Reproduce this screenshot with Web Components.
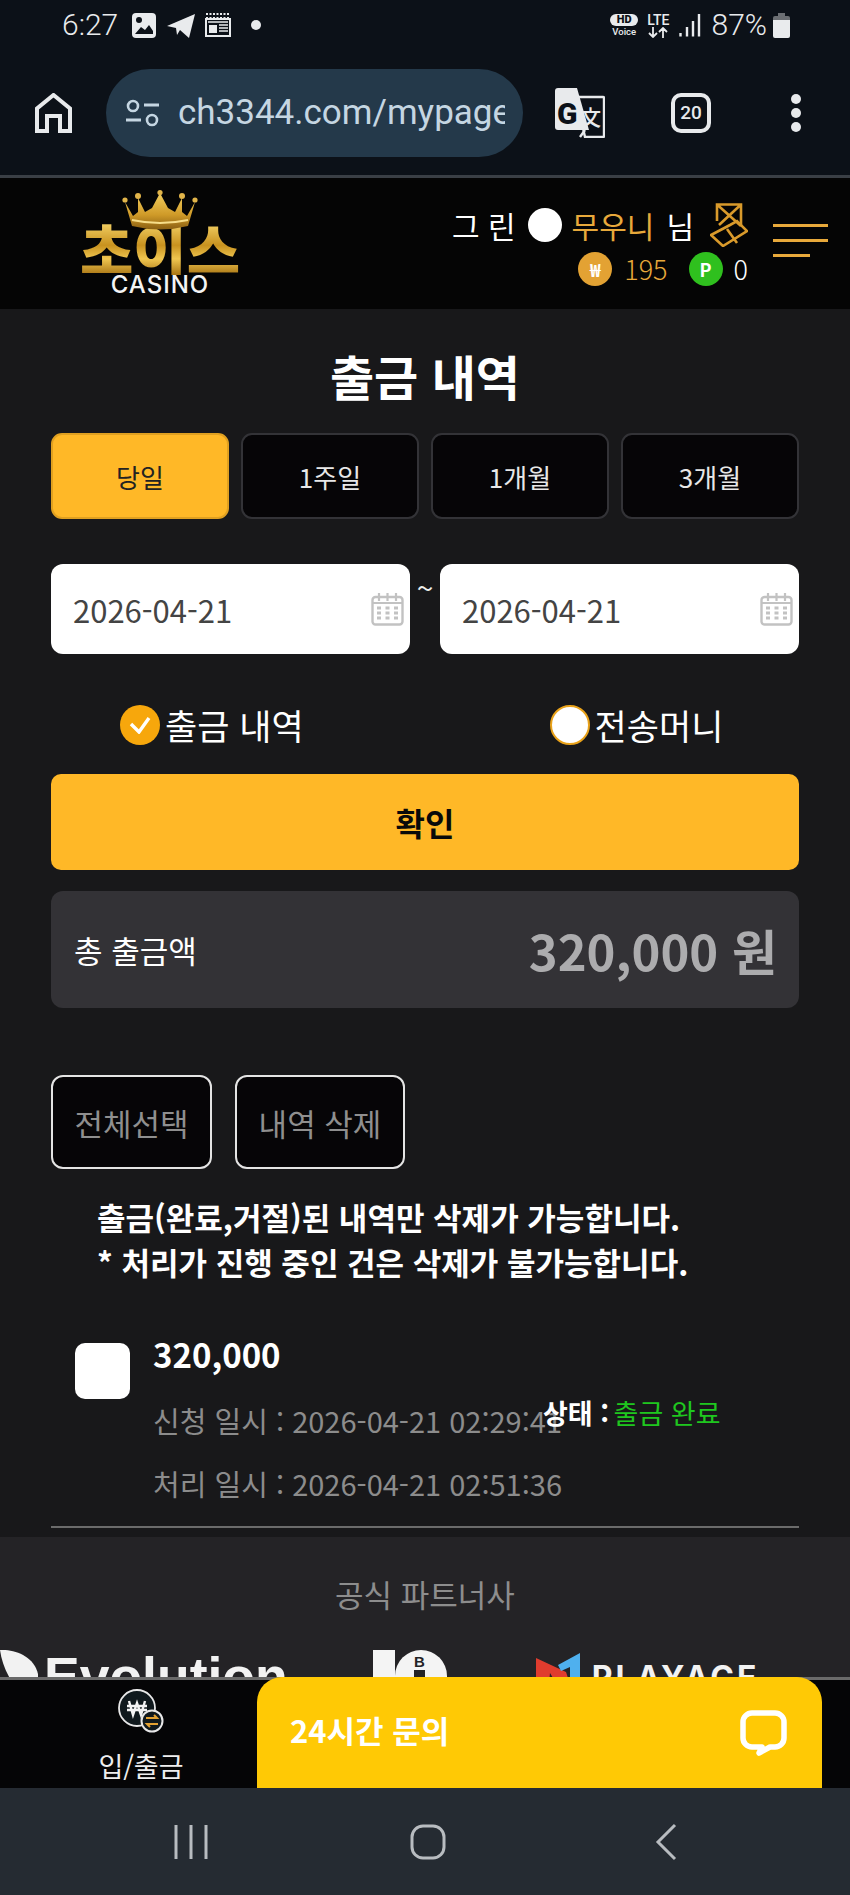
<!DOCTYPE html>
<html lang="ko">
<head>
<meta charset="utf-8">
<title>출금 내역</title>
<style>
  html, body { margin: 0; padding: 0; background: #18181a; }
  body {
    width: 850px; height: 1895px; overflow: hidden;
    display: flex; flex-direction: column;
    font-family: 'Noto Sans CJK KR', 'Noto Sans', sans-serif;
    color: #fff;
  }
</style>
</head>
<body>
<status-bar></status-bar>
<browser-bar></browser-bar>
<site-header></site-header>
<history-page>
  <h-title slot="title">출금 내역</h-title>
  <period-tab slot="tabs" active>당일</period-tab>
  <period-tab slot="tabs">1주일</period-tab>
  <period-tab slot="tabs">1개월</period-tab>
  <period-tab slot="tabs">3개월</period-tab>
  <date-field slot="from">2026-04-21</date-field>
  <date-field slot="to">2026-04-21</date-field>
  <radio-option slot="radios" checked>출금 내역</radio-option>
  <radio-option slot="radios">전송머니</radio-option>
  <dark-button slot="actions" style="width:161px">전체선택</dark-button>
  <dark-button slot="actions" style="width:170px">내역 삭제</dark-button>
  <history-item slot="items" amount="320,000" requested="2026-04-21 02:29:41" processed="2026-04-21 02:51:36" state="출금 완료"></history-item>
</history-page>
<partner-strip></partner-strip>
<bottom-dock></bottom-dock>
<nav-bar></nav-bar>

<script>
class StatusBar extends HTMLElement {
  constructor() {
    super();
    this.attachShadow({ mode: 'open' }).innerHTML = `
      <style>
        :host { display: flex; align-items: center; height: 50px; padding: 0 60px 0 62px; background: #0c1118; color: #e9ebed; font-family: Roboto, sans-serif; flex: none; }
        .time { font-size: 30px; font-weight: 300; width: 70px; line-height: 1; }
        .big { font-size: 30px; font-weight: 300; line-height: 1; margin-left: 11px; }
        svg { display: block; flex: none; }
        .grow { flex: 1; }
        .hd { display: flex; flex-direction: column; align-items: center; width: 28px; font-size: 9.5px; line-height: 11px; font-weight: 500; }
        .hd b { background: #e9ebed; color: #0c1118; border-radius: 6px; width: 28px; text-align: center; font-size: 11px; line-height: 12px; font-weight: 900; }
        .lte { display: flex; flex-direction: column; align-items: center; margin-left: 9px; font-size: 14px; line-height: 14px; font-weight: 500; }
      </style>
      <span class="time">6:27</span>
      <svg width="24" height="25" viewBox="0 0 24 25"><rect width="24" height="25" rx="4" fill="#e9ebed"/><circle cx="7" cy="7" r="3" fill="#0c1118"/><path d="M3 21l6-7 4 3 4-5 4 6v3H3z" fill="#0c1118"/></svg>
      <svg style="margin-left:11px" width="28" height="25" viewBox="0 0 28 25"><path d="M0 13L28 1l-6 24-9-8-3 5-1-7z" fill="#e9ebed"/></svg>
      <svg style="margin-left:10px" width="26" height="24" viewBox="0 0 26 24"><path d="M1 1h24M1 5h24" stroke="#e9ebed" stroke-width="2" stroke-dasharray="2 1.5"/><rect x="1" y="6" width="24" height="17" fill="none" stroke="#e9ebed" stroke-width="2"/><rect x="4" y="12" width="8" height="8" fill="#e9ebed"/><path d="M14 12h9M14 15h9M14 18h9M3 9h20" stroke="#e9ebed" stroke-width="1.6"/></svg>
      <svg style="margin-left:20px" width="10" height="10"><circle cx="5" cy="5" r="5" fill="#e9ebed"/></svg>
      <span class="grow"></span>
      <span class="hd"><b>HD</b>Voice</span>
      <span class="lte">LTE
        <svg width="20" height="11" viewBox="0 0 20 11"><path d="M5 0v10M1 6l4 4 4-4M15 11V1M11 5l4-4 4 4" fill="none" stroke="#e9ebed" stroke-width="1.8"/></svg>
      </span>
      <svg style="margin-left:9px" width="22" height="24" viewBox="0 0 22 24"><path d="M1.500 20v3.500M8 14v9.500M14 8v15.500M20 1v22.500" stroke="#e9ebed" stroke-width="2.400"/></svg>
      <span class="big">87%</span>
      <svg style="margin-left:6px" width="17" height="25" viewBox="0 0 17 25"><path d="M5 0h7v3H5z" fill="#6b6e72"/><path d="M2 3h13a2 2 0 0 1 2 2v2H0V5a2 2 0 0 1 2-2z" fill="#6b6e72"/><path d="M0 7h17v16a2 2 0 0 1-2 2H2a2 2 0 0 1-2-2z" fill="#e9ebed"/></svg>`;
  }
}

class BrowserBar extends HTMLElement {
  constructor() {
    super();
    this.attachShadow({ mode: 'open' }).innerHTML = `
      <style>
        :host { display: flex; align-items: center; height: 125px; padding: 0 0 0 35px; box-sizing: border-box; background: #0c1118; flex: none; font-family: Roboto, sans-serif; }
        svg { display: block; flex: none; }
        .pill { display: flex; align-items: center; width: 417px; height: 88px; margin-left: 34px; padding-left: 19px; box-sizing: border-box; border-radius: 44px; background: #24394a; color: #c5d6e2; }
        .url { width: 327px; margin-left: 19px; font-size: 35px; font-weight: 400; white-space: nowrap; overflow: hidden; }
        .tabs { width: 40px; height: 40px; margin-left: 66px; box-sizing: border-box; border: 4px solid #e8eaec; border-radius: 10px; color: #e8eaec; font-size: 19px; font-weight: 500; display: flex; align-items: center; justify-content: center; }
      </style>
      <svg width="37" height="40" viewBox="0 0 37 40"><path d="M2 38V15.500L18.500 2 35 15.500V38H25V23H12v15z" fill="none" stroke="#e8eaec" stroke-width="4"/></svg>
      <div class="pill">
        <svg width="34" height="28" viewBox="0 0 34 28"><circle cx="8" cy="7" r="5" fill="none" stroke="#c5d6e2" stroke-width="2.600"/><path d="M19 6h15M1 21h15" stroke="#c5d6e2" stroke-width="3"/><circle cx="27" cy="21" r="5" fill="none" stroke="#c5d6e2" stroke-width="2.600"/></svg>
        <span class="url">ch3344.com/mypage</span>
      </div>
      <svg style="margin-left:32px" width="50" height="50" viewBox="0 0 50 50">
        <path d="M21 9h27a1 1 0 0 1 1 1v38a1 1 0 0 1-1 1H30z" fill="#0c1118" stroke="#e8eaec" stroke-width="2.400"/>
        <path d="M3 0h19l12 42H3a3 3 0 0 1-3-3V3a3 3 0 0 1 3-3z" fill="#e8eaec"/>
        <path d="M30 42l-5 7" stroke="#e8eaec" stroke-width="2.400"/>
        <text x="2" y="36" font-family="Roboto, sans-serif" font-size="30" font-weight="900" fill="#0c1118">G</text>
        <text x="25" y="37" font-family="'Noto Sans CJK SC', sans-serif" font-size="21" font-weight="500" fill="#e8eaec">文</text>
      </svg>
      <div class="tabs">20</div>
      <svg style="margin-left:80px" width="10" height="38" viewBox="0 0 10 38"><circle cx="5" cy="5" r="5" fill="#e8eaec"/><circle cx="5" cy="19" r="5" fill="#e8eaec"/><circle cx="5" cy="33" r="5" fill="#e8eaec"/></svg>`;
  }
}

class ChoiceLogo extends HTMLElement {
  constructor() {
    super();
    this.attachShadow({ mode: 'open' }).innerHTML = `
      <style>
        :host { display: block; position: relative; width: 160px; height: 115px; flex: none; }
        .crown { position: absolute; left: 42px; top: 0; }
        .name { position: absolute; left: 0; top: 31px; width: 160px; text-align: center; font-size: 58px; line-height: 54px; font-weight: 900; white-space: nowrap;
          background: linear-gradient(180deg, #f6d56a 0%, #c8921f 45%, #f0c650 70%, #a97514 100%); -webkit-background-clip: text; background-clip: text; color: transparent; }
        .casino { position: absolute; left: 0; top: 85px; width: 160px; text-align: center; font-family: Inter, sans-serif; font-weight: 500; font-size: 24px; letter-spacing: 1px; line-height: 20px; color: #f4f4f4; }
      </style>
      <div class="name">초이스</div>
      <svg class="crown" width="76" height="40" viewBox="0 0 76 40">
        <defs><linearGradient id="g" x1="0" y1="0" x2="0" y2="1"><stop offset="0" stop-color="#f3cf5e"/><stop offset="0.6" stop-color="#cf9a28"/><stop offset="1" stop-color="#8a5f12"/></linearGradient></defs>
        <path d="M3 12l8 14 5-4 0-14 7 14 7-4 8-15 8 15 7 4 7-14 0 14 5 4 8-14-7 24q-28 7-56 0z" fill="url(#g)"/>
        <path d="M10 30q28 6 56 0" fill="none" stroke="#f7de8a" stroke-width="2"/>
        <g fill="#e2b54a"><circle cx="3" cy="10" r="2.600"/><circle cx="16" cy="6" r="3"/><circle cx="38" cy="2.600" r="2.600"/><circle cx="60" cy="6" r="3"/><circle cx="73" cy="10" r="2.600"/></g>
      </svg>
      <div class="casino">CASINO</div>`;
  }
}

class SiteHeader extends HTMLElement {
  constructor() {
    super();
    this.attachShadow({ mode: 'open' }).innerHTML = `
      <style>
        :host { display: flex; height: 134px; box-sizing: border-box; border-top: 3px solid #3a3f45; background: #050505; flex: none; position: relative; }
        choice-logo { margin: 12px 0 0 80px; }
        .user { display: flex; flex-direction: column; align-items: flex-end; margin-left: auto; }
        .row1 { display: flex; align-items: center; margin-top: 24px; height: 46px; font-size: 30px; line-height: 46px; white-space: pre; }
        .dot { width: 34px; height: 34px; border-radius: 50%; background: #fff; margin: 0 10px 0 12px; }
        .gold { color: #e8a93b; }
        .nim { margin-left: 12px; }
        .badge { margin-left: 16px; }
        .row2 { display: flex; align-items: center; height: 42px; font-size: 27px; font-weight: 300; line-height: 42px; }
        .coin { width: 34px; height: 34px; border-radius: 50%; display: flex; align-items: center; justify-content: center; font-size: 18px; font-weight: 700; color: #fff; }
        .menu { display: flex; flex-direction: column; gap: 12px; width: 55px; margin: 46px 22px 0 25px; }
        .menu i { display: block; height: 3px; background: #e8a93b; }
        .menu i:last-child { width: 37px; }
      </style>
      <choice-logo></choice-logo>
      <div class="user">
        <div class="row1"><span>그 린</span><span class="dot"></span><span class="gold">무우니</span><span class="nim">님</span>
          <svg class="badge" width="38" height="44" viewBox="0 0 38 44" fill="none" stroke="#d99a2b" stroke-width="2.600"><path d="M7 18V1.500h24V23M7 1.500L31 23M31 1.500L9 22"/><path d="M1 32l12 11 24-15-10-10-7 4zM17 26l10 14"/></svg>
        </div>
        <div class="row2">
          <span class="coin" style="background:#e3a233">₩</span><span class="gold" style="margin:0 21px 0 12px">195</span>
          <span class="coin" style="background:#2fc01e">P</span><span style="margin-left:11px">0</span>
        </div>
      </div>
      <div class="menu"><i></i><i></i><i></i></div>`;
  }
}

class HistoryPage extends HTMLElement {
  constructor() {
    super();
    this.attachShadow({ mode: 'open' }).innerHTML = `
      <style>
        :host { display: block; height: 1228px; box-sizing: border-box; padding: 42px 51px 0; background: #18181a; flex: none; }
        .tabs { display: grid; grid-template-columns: repeat(4, 1fr); gap: 12px; height: 86px; margin-top: 34px; }
        .dates { display: flex; height: 90px; margin-top: 45px; }
        .tilde { width: 30px; text-align: center; font-size: 30px; line-height: 46px; color: #eee; }
        .radios { display: flex; gap: 246px; height: 40px; margin-top: 51px; padding-left: 69px; }
        .confirm { height: 96px; margin-top: 29px; border-radius: 10px; background: #ffb827; color: #0a0a0a; font-size: 32px; font-weight: 700; display: flex; align-items: center; justify-content: center; }
        .total { display: flex; align-items: center; justify-content: space-between; height: 117px; margin-top: 21px; padding: 0 22px 0 23px; border-radius: 12px; background: #333236; font-size: 31px; }
        .total b { font-size: 49px; color: #acacae; font-weight: 700; }
        .actions { display: flex; gap: 23px; height: 94px; margin-top: 67px; }
        .notes { margin-top: 25px; padding-left: 46px; font-size: 31px; line-height: 45px; font-weight: 700; white-space: nowrap; }
        .items { margin-top: 45px; }
      </style>
      <slot name="title"></slot>
      <div class="tabs"><slot name="tabs"></slot></div>
      <div class="dates"><slot name="from"></slot><div class="tilde">~</div><slot name="to"></slot></div>
      <div class="radios"><slot name="radios"></slot></div>
      <div class="confirm">확인</div>
      <div class="total"><span>총 출금액</span><b>320,000 원</b></div>
      <div class="actions"><slot name="actions"></slot></div>
      <div class="notes">출금(완료,거절)된 내역만 삭제가 가능합니다.<br>* 처리가 진행 중인 건은 삭제가 불가능합니다.</div>
      <div class="items"><slot name="items"></slot></div>`;
  }
}

class HTitle extends HTMLElement {
  constructor() {
    super();
    this.attachShadow({ mode: 'open' }).innerHTML = `
      <style>:host { display: block; height: 48px; font-size: 48px; line-height: 48px; font-weight: 700; text-align: center; }</style>
      <slot></slot>`;
  }
}

class PeriodTab extends HTMLElement {
  constructor() {
    super();
    this.attachShadow({ mode: 'open' }).innerHTML = `
      <style>
        :host { display: flex; align-items: center; justify-content: center; box-sizing: border-box; border: 2px solid #333337; border-radius: 11px; background: #060507; color: #e8e8e8; font-size: 26px; }
        :host([active]) { background: #ffb827; border-color: #e0a020; color: #222; }
      </style>
      <slot></slot>`;
  }
}

class DateField extends HTMLElement {
  constructor() {
    super();
    this.attachShadow({ mode: 'open' }).innerHTML = `
      <style>
        :host { display: flex; align-items: center; justify-content: space-between; width: 359px; height: 90px; box-sizing: border-box; padding: 0 6px 0 22px; border-radius: 12px; background: #fff; color: #444; font-size: 31px; }
        svg { display: block; }
      </style>
      <slot></slot>
      <svg width="33" height="34" viewBox="0 0 33 34" fill="none" stroke="#c2c2c2"><rect x="1.500" y="5" width="30" height="27.500" rx="3" stroke-width="2.400"/><path d="M8 1v8M16.500 1v8M25 1v8" stroke-width="2.200"/><path d="M1.500 11h30" stroke-width="2"/><path d="M6 16h4M14.500 16h4M23 16h4M6 21h4M14.500 21h4M23 21h4M6 26h4M14.500 26h4M23 26h4" stroke-width="3"/></svg>`;
  }
}

class RadioOption extends HTMLElement {
  constructor() {
    super();
    const mark = this.hasAttribute('checked')
      ? '<svg width="22" height="18" viewBox="0 0 22 18"><path d="M2 8l8 8 10-14" fill="none" stroke="#fff" stroke-width="3.400"/></svg>'
      : '';
    this.attachShadow({ mode: 'open' }).innerHTML = `
      <style>
        :host { display: flex; align-items: center; gap: 5px; height: 40px; font-size: 35px; line-height: 40px; white-space: nowrap; }
        .mark { width: 40px; height: 40px; box-sizing: border-box; border-radius: 50%; background: #fff; border: 2px solid #e9a21a; display: flex; align-items: center; justify-content: center; }
        :host([checked]) .mark { background: #f7a70c; border: 0; }
      </style>
      <span class="mark">${mark}</span><slot></slot>`;
  }
}

class DarkButton extends HTMLElement {
  constructor() {
    super();
    this.attachShadow({ mode: 'open' }).innerHTML = `
      <style>
        :host { display: flex; align-items: center; justify-content: center; height: 94px; box-sizing: border-box; border: 2px solid #e4e4e4; border-radius: 12px; background: #060507; color: #8f8f8f; font-size: 31px; white-space: nowrap; }
      </style>
      <slot></slot>`;
  }
}

class HistoryItem extends HTMLElement {
  constructor() {
    super();
    const a = (n) => this.getAttribute(n);
    this.attachShadow({ mode: 'open' }).innerHTML = `
      <style>
        :host { display: flex; position: relative; padding: 7px 0 11px 24px; border-bottom: 2px solid #6b6b6b; }
        .box { width: 55px; height: 56px; margin: 7px 23px 0 0; border-radius: 10px; background: #fff; flex: none; }
        .amount { font-size: 33px; line-height: 40px; font-weight: 700; margin-top: -2px; }
        .line { font-size: 29px; line-height: 63px; color: #8c8c8c; white-space: nowrap; }
        .state { position: absolute; left: 492px; top: 64px; font-size: 27px; line-height: 40px; font-weight: 700; white-space: nowrap; }
        .state span { color: #1fc71f; font-weight: 400; margin-left: -3px; }
      </style>
      <div class="box"></div>
      <div>
        <div class="amount">${a('amount')}</div>
        <div class="line" style="margin-top:15px">신청 일시 : ${a('requested')}</div>
        <div class="line">처리 일시 : ${a('processed')}</div>
      </div>
      <div class="state">상태 : <span>${a('state')}</span></div>`;
  }
}

class PartnerStrip extends HTMLElement {
  constructor() {
    super();
    this.attachShadow({ mode: 'open' }).innerHTML = `
      <style>
        :host { display: block; height: 140px; overflow: hidden; background: #242326; flex: none; }
        .title { padding-top: 41px; font-size: 31px; line-height: 32px; color: #8d8d8d; text-align: center; }
        .logos { display: flex; align-items: flex-start; margin-top: 40px; color: #f2f2f2; white-space: nowrap; }
        .evo { margin: 0 0 0 6px; font-family: 'Liberation Sans', sans-serif; font-weight: 700; font-size: 53.5px; line-height: 54px; }
        .play { margin: 8px 0 0 12px; font-family: Inter, sans-serif; font-weight: 700; font-size: 32px; letter-spacing: 3px; line-height: 40px; }
      </style>
      <div class="title">공식 파트너사</div>
      <div class="logos">
        <svg width="38" height="40" viewBox="0 0 38 40"><path d="M0 0C14-1 34 6 38 24V40H18C8 28 2 14 0 0z" fill="#f2f2f2"/></svg>
        <span class="evo">Evolution</span>
        <svg style="margin-left:85px" width="74" height="40" viewBox="0 0 74 40">
          <path d="M0 0h22v40H0z" fill="#f4f4f4"/><circle cx="48" cy="26" r="26" fill="#f4f4f4"/>
          <path d="M22 0h8C26 6 23 12 22 20z" fill="#242326"/>
          <text x="41" y="17" font-family="'Liberation Sans', sans-serif" font-size="15" font-weight="700" fill="#242326">B</text>
          <rect x="41" y="20" width="11" height="20" fill="#242326"/>
        </svg>
        <svg style="margin-left:89px;margin-top:3px" width="44" height="40" viewBox="0 0 44 40"><path d="M0 5l30 14 7 21H26L14 20 12 40H0z" fill="#e03c2e"/><path d="M22 12L44 0v40H34V14l-9 4z" fill="#4fb0ee"/></svg>
        <span class="play">PLAYACE</span>
      </div>`;
  }
}

class BottomDock extends HTMLElement {
  constructor() {
    super();
    this.attachShadow({ mode: 'open' }).innerHTML = `
      <style>
        :host { display: flex; height: 111px; box-sizing: border-box; border-top: 3px solid #6a6a6a; background: #050506; flex: none; }
        .money { width: 257px; flex: none; display: flex; flex-direction: column; align-items: center; padding: 9px 0 0 25px; box-sizing: border-box; font-size: 27px; line-height: 38px; color: #eee; }
        svg { display: block; }
        .chat { display: flex; align-items: center; justify-content: space-between; width: 565px; height: 111px; margin-top: -3px; padding: 0 35px 0 33px; box-sizing: border-box; border-radius: 25px 25px 0 0; background: #ffc905; color: #fff; font-size: 31px; font-weight: 700; }
        .chat span { margin-top: -6px; }
      </style>
      <div class="money">
        <svg width="46" height="44" viewBox="0 0 46 44">
          <circle cx="19" cy="19" r="18" fill="#10191d" stroke="#e8e8e8" stroke-width="1.800"/>
          <path d="M11 12l4 14 4-12 4 12 4-14M9 17h20M9 21h20" fill="none" stroke="#f4f4f4" stroke-width="2.400"/>
          <circle cx="34" cy="32" r="10.500" fill="#10191d" stroke="#e8e8e8" stroke-width="2"/>
          <path d="M28 29h11l-3-3M40 35H29l3 3" fill="none" stroke="#e3a233" stroke-width="2"/>
        </svg>
        <span style="margin-top:14px">입/출금</span>
      </div>
      <div class="chat">
        <span>24시간 문의</span>
        <svg width="47" height="46" viewBox="0 0 47 46"><path d="M12 3h23a9 9 0 0 1 9 9v16a9 9 0 0 1-9 9H30l-11 6 3-6H12a9 9 0 0 1-9-9V12a9 9 0 0 1 9-9z" fill="none" stroke="#fff" stroke-width="5.500" stroke-linejoin="round"/></svg>
      </div>`;
  }
}

class NavBar extends HTMLElement {
  constructor() {
    super();
    this.attachShadow({ mode: 'open' }).innerHTML = `
      <style>
        :host { display: flex; align-items: center; height: 107px; box-sizing: border-box; padding: 0 0 0 174px; background: #252b32; flex: none; }
        svg { display: block; }
      </style>
      <svg width="34" height="36" viewBox="0 0 34 36"><path d="M2 1v34M17 1v34M32 1v34" stroke="#b8bcc0" stroke-width="3"/></svg>
      <svg style="margin-left:202px" width="36" height="36" viewBox="0 0 36 36"><rect x="2" y="2" width="32" height="32" rx="11" fill="none" stroke="#b8bcc0" stroke-width="3"/></svg>
      <svg style="margin-left:209px" width="22" height="38" viewBox="0 0 22 38"><path d="M20 2L3 19l17 17" fill="none" stroke="#b8bcc0" stroke-width="3"/></svg>`;
  }
}

customElements.define('status-bar', StatusBar);
customElements.define('browser-bar', BrowserBar);
customElements.define('choice-logo', ChoiceLogo);
customElements.define('site-header', SiteHeader);
customElements.define('history-page', HistoryPage);
customElements.define('h-title', HTitle);
customElements.define('period-tab', PeriodTab);
customElements.define('date-field', DateField);
customElements.define('radio-option', RadioOption);
customElements.define('dark-button', DarkButton);
customElements.define('history-item', HistoryItem);
customElements.define('partner-strip', PartnerStrip);
customElements.define('bottom-dock', BottomDock);
customElements.define('nav-bar', NavBar);
</script>
</body>
</html>
